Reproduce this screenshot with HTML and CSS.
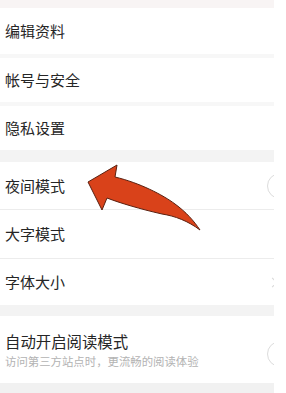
FILE: index.html
```html
<!DOCTYPE html>
<html lang="zh">
<head>
<meta charset="utf-8">
<link rel="stylesheet" href="styles.css">
</head>
<body>
<div class="screen">
  <div class="band band-top"></div>
  <div class="row r1"><span class="label">编辑资料</span></div>
  <div class="sep"></div>
  <div class="row r2"><span class="label">帐号与安全</span></div>
  <div class="sep"></div>
  <div class="row r3"><span class="label">隐私设置</span></div>
  <div class="band band-mid"></div>
  <div class="row r4"><span class="label">夜间模式</span><span class="knob"></span></div>
  <div class="line"></div>
  <div class="row r5"><span class="label">大字模式</span></div>
  <div class="line"></div>
  <div class="row r6"><span class="label">字体大小</span><span class="chev"></span></div>
  <div class="band band-low"></div>
  <div class="row r7">
    <div class="text">
      <div class="label big">自动开启阅读模式</div>
      <div class="sub">访问第三方站点时，更流畅的阅读体验</div>
    </div>
    <span class="knob"></span>
  </div>
  <div class="band band-bottom"></div>
</div>
<svg class="arrow" width="286" height="393" viewBox="0 0 286 393">
  <path d="M88 182 L117 165 L115 177 C140 183 163 195 175 204 C186 212 194 221 200 230 C188 221 175 216 162 214 C140 209 120 203 107 198 L102 210 Z" fill="#d9421a" stroke="#5a2010" stroke-width="1" stroke-linejoin="round"/>
</svg>
</body>
</html>
```
FILE: styles.css
```css
html, body {
  margin: 0;
  padding: 0;
  background: #ffffff;
}
body {
  position: relative;
  width: 286px;
  height: 393px;
  overflow: hidden;
  font-family: "Noto Sans CJK SC", "Noto Sans", sans-serif;
}
.screen {
  width: 274px;
  overflow: hidden;
  display: flex;
  flex-direction: column;
}
.band { background: #f3f3f3; }
.band-top { height: 8px; background: #f8f4f4; }
.band-mid { height: 12px; }
.band-low { height: 11px; }
.band-bottom { height: 10px; background: #f1f1f1; }
.sep { height: 4px; background: #f7f7f7; }
.line { height: 1px; background: #ececec; }
.row {
  display: flex;
  align-items: center;
  justify-content: space-between;
  padding-left: 5px;
  background: #fff;
}
.r1 { height: 46px; }
.r2 { height: 44px; }
.r3 { height: 44px; }
.r4 { height: 47px; }
.r5 { height: 48px; }
.r6 { height: 46px; }
.r7 { height: 67px; }
.label {
  font-size: 15px;
  color: #262626;
  line-height: 20px;
}
.label.big { font-size: 15.4px; }
.text {
  display: flex;
  flex-direction: column;
}
.sub {
  font-size: 11.4px;
  color: #b3b3b3;
  line-height: 14px;
  margin-top: 3px;
}
.knob {
  width: 26px;
  height: 26px;
  border-radius: 50%;
  border: 1px solid #dcdcdc;
  box-sizing: border-box;
  margin-right: -19px;
  flex: none;
  background: #fff;
}
.r7 .knob { margin-top: 8px; }
.chev {
  width: 6px;
  height: 6px;
  border-top: 1px solid #d8d8d8;
  border-right: 1px solid #d8d8d8;
  transform: rotate(45deg);
  margin-right: -2px;
}
.arrow {
  position: absolute;
  left: 0;
  top: 0;
  pointer-events: none;
}
```
